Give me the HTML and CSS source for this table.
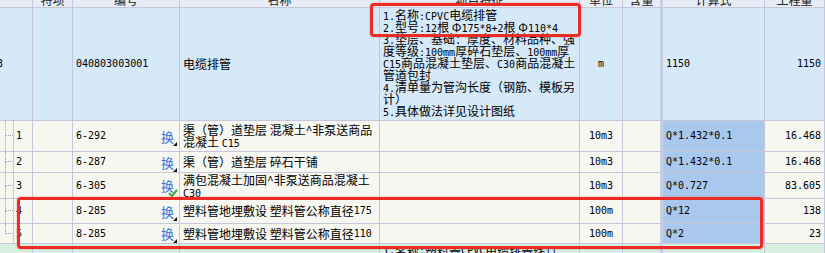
FILE: index.html
```html
<!DOCTYPE html>
<html lang="zh-CN">
<head>
<meta charset="utf-8">
<title>清单</title>
<link rel="stylesheet" href="styles.css">
</head>
<body>
<div class="view">
  <div class="grid">
    <!-- header -->
    <div class="c h"></div>
    <div class="c h">特项</div>
    <div class="c h">编号</div>
    <div class="c h">名称</div>
    <div class="c h">项目特征</div>
    <div class="c h">单位</div>
    <div class="c h k">含量</div>
    <div class="c h">计算式</div>
    <div class="c h">工程量</div>

    <!-- main row -->
    <div class="c m"><span class="a cut">3</span></div>
    <div class="c m"></div>
    <div class="c m"><span class="a">040803003001</span></div>
    <div class="c m">电缆排管</div>
    <div class="c m feat"><div class="lines">
      <div><span class="a">1.</span>名称<span class="a">:CPVC</span>电缆排管</div>
      <div><span class="a">2.</span>型号<span class="a">:12</span>根 Φ<span class="a">175*8+2</span>根 Φ<span class="a">110*4</span></div>
      <div><span class="a">3.</span>垫层、基础：厚度、材料品种、强</div>
      <div>度等级<span class="a">:100mm</span>厚碎石垫层、<span class="a">100mm</span>厚</div>
      <div><span class="a">C15</span>商品混凝土垫层、<span class="a">C30</span>商品混凝土</div>
      <div>管道包封</div>
      <div><span class="a">4.</span>清单量为管沟长度（钢筋、模板另</div>
      <div>计）</div>
      <div><span class="a">5.</span>具体做法详见设计图纸</div>
    </div></div>
    <div class="c m ctr"><span class="a">m</span></div>
    <div class="c m k"></div>
    <div class="c m"><span class="a">1150</span></div>
    <div class="c m rt"><span class="a">1150</span></div>

    <!-- child 1 -->
    <div class="c r t"><div class="tree"><div class="twig"></div><div class="rest"></div></div><span class="a num">1</span></div>
    <div class="c r"></div>
    <div class="c r code"><span class="a">6-292</span><span class="hx">换</span></div>
    <div class="c r"><div class="lines"><div>渠（管）道垫层 混凝土^非泵送商品</div><div>混凝土 <span class="a">C15</span></div></div></div>
    <div class="c r"></div>
    <div class="c r ctr"><span class="a">10m3</span></div>
    <div class="c r k"></div>
    <div class="c r q"><span class="a">Q*1.432*0.1</span></div>
    <div class="c r rt"><span class="a">16.468</span></div>

    <!-- child 2 -->
    <div class="c r t"><div class="tree"><div class="twig"></div><div class="rest"></div></div><span class="a num">2</span></div>
    <div class="c r"></div>
    <div class="c r code"><span class="a">6-287</span><span class="hx">换</span></div>
    <div class="c r">渠（管）道垫层 碎石干铺</div>
    <div class="c r"></div>
    <div class="c r ctr"><span class="a">10m3</span></div>
    <div class="c r k"></div>
    <div class="c r q"><span class="a">Q*1.432*0.1</span></div>
    <div class="c r rt"><span class="a">16.468</span></div>

    <!-- child 3 -->
    <div class="c r t"><div class="tree"><div class="twig"></div><div class="rest"></div></div><span class="a num">3</span></div>
    <div class="c r"></div>
    <div class="c r code"><span class="a">6-305</span><span class="hx ok">换<svg class="check" width="10" height="8" viewBox="0 0 10 8"><path d="M1 4 L4 7 L9 1" fill="none" stroke="#3daa3a" stroke-width="2"/></svg></span></div>
    <div class="c r"><div class="lines"><div>满包混凝土加固^非泵送商品混凝土</div><div><span class="a">C30</span></div></div></div>
    <div class="c r"></div>
    <div class="c r ctr"><span class="a">10m3</span></div>
    <div class="c r k"></div>
    <div class="c r q"><span class="a">Q*0.727</span></div>
    <div class="c r rt"><span class="a">83.605</span></div>

    <!-- child 4 -->
    <div class="c r t"><div class="tree"><div class="twig"></div><div class="rest"></div></div><span class="a num">4</span></div>
    <div class="c r"></div>
    <div class="c r code"><span class="a">8-285</span><span class="hx">换</span></div>
    <div class="c r">塑料管地埋敷设 塑料管公称直径<span class="a">175</span></div>
    <div class="c r"></div>
    <div class="c r ctr"><span class="a">100m</span></div>
    <div class="c r k"></div>
    <div class="c r q"><span class="a">Q*12</span></div>
    <div class="c r rt"><span class="a">138</span></div>

    <!-- child 5 -->
    <div class="c r t"><div class="tree"><div class="twig"></div><div class="rest last"></div></div><span class="a num">5</span></div>
    <div class="c r"></div>
    <div class="c r code"><span class="a">8-285</span><span class="hx">换</span></div>
    <div class="c r">塑料管地埋敷设 塑料管公称直径<span class="a">110</span></div>
    <div class="c r"></div>
    <div class="c r ctr"><span class="a">100m</span></div>
    <div class="c r k"></div>
    <div class="c r q"><span class="a">Q*2</span></div>
    <div class="c r rt"><span class="a">23</span></div>

    <!-- next item (cut off) -->
    <div class="c g"></div>
    <div class="c g"></div>
    <div class="c g"></div>
    <div class="c g"></div>
    <div class="c g"><span class="a">1.</span>名称<span class="a">:</span>塑料管<span class="a">CPVC</span>电缆排管线 <span class="a">||</span></div>
    <div class="c g"></div>
    <div class="c g k"></div>
    <div class="c g"></div>
    <div class="c g"></div>
  </div>
  <div class="mark mark-top"></div>
  <div class="mark mark-bottom"></div>
</div>
</body>
</html>
```
FILE: styles.css
```css
* { box-sizing: border-box; }
body {
  margin: 0;
  background: #ffffff;
  color: #000;
  font: 12px/12px "Noto Sans CJK SC", sans-serif;
}
.view {
  position: relative;
  width: 825px;
  height: 253px;
  overflow: hidden;
}
.grid {
  display: grid;
  grid-template-columns: 33px 40px 107px 200px 200px 43px 40px 102px 60px;
  grid-template-rows: 23px 113px 31px 21px 26px 25px 20px 30px;
  margin-top: -15px;
}
.c {
  border-right: 1px solid #c7c7db;
  border-bottom: 1px solid #c7c7db;
  display: flex;
  align-items: center;
  overflow: hidden;
  white-space: nowrap;
  padding: 0 3px;
}
.h {
  background: #e6edf7;
  justify-content: center;
  align-items: flex-end;
  padding-bottom: 1px;
  color: #222;
}
.m { background: #d6e9f8; }
.r { background: #f7f7f2; }
.g {
  background: #d8efe1;
  align-items: flex-start;
  padding-top: 2px;
}
.k { border-right: 3px solid #c9cee1; }
.q { background: #a8c8ee; }
.ctr { justify-content: center; }
.rt { justify-content: flex-end; }
.a {
  font-family: "DejaVu Sans Mono", monospace;
  font-size: 10px;
  line-height: 10px;
}
.cut { margin-left: -6px; }
.lines > div {
  height: 12px;
  line-height: 12px;
}
.feat .lines { margin-top: -2px; }

/* tree column */
.t { padding: 0; align-items: stretch; }
.tree {
  width: 14px;
  display: flex;
  flex-direction: column;
  border-right: 1px solid #c7c7db;
  padding-left: 5px;
}
.twig {
  height: 50%;
  border-left: 1px dotted #9ea3c4;
  border-bottom: 1px dotted #9ea3c4;
}
.rest {
  flex: 1;
  border-left: 1px dotted #9ea3c4;
}
.rest.last { border-left-color: transparent; }
.num { align-self: center; padding-left: 2px; }

/* code column with replace icon */
.code { justify-content: space-between; padding-right: 5px; }
.hx {
  position: relative;
  color: #3b6ee2;
  font-size: 13px;
  line-height: 13px;
}
.hx::after {
  content: "";
  position: absolute;
  right: -3px;
  bottom: -3px;
  width: 0;
  height: 0;
  border-left: 4px solid transparent;
  border-bottom: 4px solid #111;
}
.hx.ok::after { display: none; }
.check {
  position: absolute;
  right: -4px;
  bottom: -5px;
}

/* red annotation boxes */
.mark {
  position: absolute;
  border: 3px solid #ec2b25;
  border-radius: 4px;
  box-shadow: 0 0 2px rgba(236, 43, 37, 0.5);
}
.mark-top { left: 370px; top: 3px; width: 211px; height: 34px; }
.mark-bottom { left: 17px; top: 197px; width: 746px; height: 52px; }
```
